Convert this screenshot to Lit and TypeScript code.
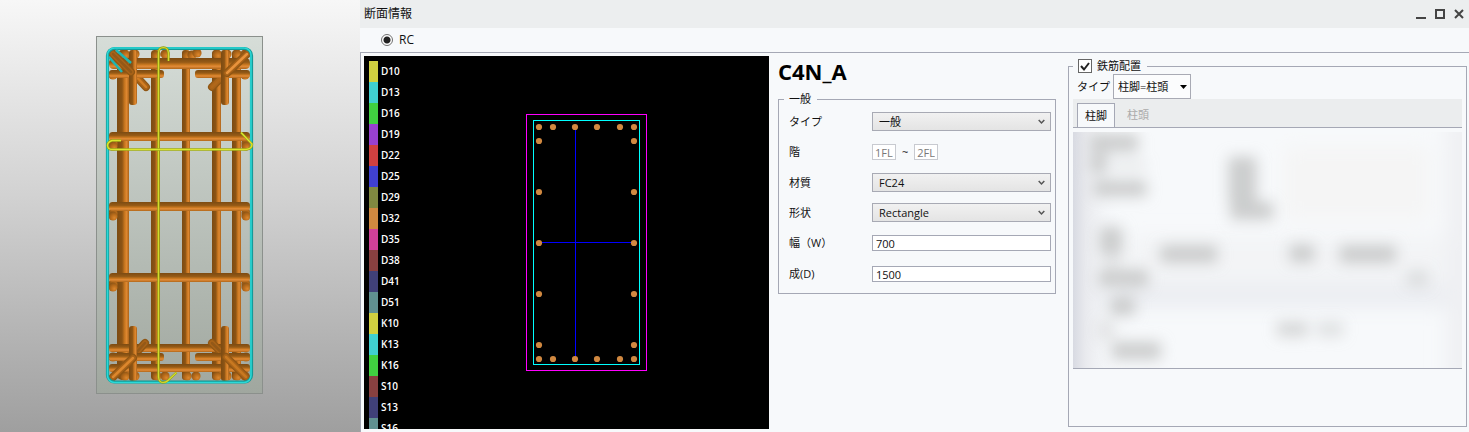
import { LitElement, html, svg, css } from "lit";
import { customElement, state } from "lit/decorators.js";

type Pt = [number, number];

/** Shaded view of the column's reinforcement cage. */
@customElement("cage-view")
class CageView extends LitElement {
  static styles = css`
    :host {
      display: block;
      min-width: 0;
      background: linear-gradient(#f7f7f7, #d2d2d2 45%, #9f9f9f);
      overflow: hidden;
    }
    .scene {
      display: block;
      width: 100%;
      height: 100%;
    }
  `;

  private vbar(x: number, w: number, y1: number, y2: number) {
    return svg`<rect x=${x} y=${y1} width=${w} height=${y2 - y1} rx=${w / 2 - 1} fill="url(#across)"/>`;
  }

  private hbar(y: number, h: number, x1: number, x2: number) {
    return svg`<rect x=${x1} y=${y} width=${x2 - x1} height=${h} rx=${h / 2 - 1} fill="url(#down)"/>`;
  }

  private slant(a: Pt, b: Pt, lit: string) {
    const d = `M${a[0]} ${a[1]}L${b[0]} ${b[1]}`;
    return svg`<g fill="none" stroke-linecap="round">
      <path d=${d} stroke="#8f5614" stroke-width="8"/>
      <path d=${d} stroke="#a96318" stroke-width="5.5"/>
      <path d=${d} stroke=${lit} stroke-width="2.5"/></g>`;
  }

  private knob(x: number, y: number) {
    return svg`<circle cx=${x} cy=${y} r="4.6" fill="url(#ball)"/>`;
  }

  render() {
    return html`<svg class="scene" viewBox="0 0 360 432" role="img" aria-label="3D">
      <defs>
        <linearGradient id="frame" x1="0" y1="0" x2="0" y2="1">
          <stop offset="0" stop-color="#d6ddd8" /><stop offset="1" stop-color="#a0a79f" />
        </linearGradient>
        <linearGradient id="across">
          <stop offset="0" stop-color="#7c4b12" /><stop offset=".42" stop-color="#8c5415" />
          <stop offset=".62" stop-color="#c4741e" /><stop offset=".8" stop-color="#df8831" />
          <stop offset="1" stop-color="#a9631a" />
        </linearGradient>
        <linearGradient id="down" x1="0" y1="0" x2="0" y2="1">
          <stop offset="0" stop-color="#7c4b12" /><stop offset=".38" stop-color="#955a16" />
          <stop offset=".62" stop-color="#cb7920" /><stop offset=".75" stop-color="#e38c38" />
          <stop offset="1" stop-color="#b0671a" />
        </linearGradient>
        <radialGradient id="ball" cx=".65" cy=".7" r=".7">
          <stop offset="0" stop-color="#dc872d" /><stop offset=".5" stop-color="#b96c1b" />
          <stop offset="1" stop-color="#8c5415" />
        </radialGradient>
      </defs>
      <rect x="96.5" y="36.5" width="166" height="357" fill="url(#frame)" stroke="#8b908c" />
      ${this.vbar(117, 12, 50, 380)} ${this.vbar(151, 9, 50, 380)}
      ${this.vbar(182, 8, 50, 380)} ${this.vbar(212, 9, 50, 380)} ${this.vbar(232, 9, 50, 380)}
      ${[
        [113, 54], [125, 54], [135, 54], [156, 55], [165, 54], [187, 55], [192, 55], [197, 53],
        [217, 54], [227, 54], [237, 54], [245, 54], [113, 75], [245, 75],
        [113, 143], [113, 146], [246, 143], [246, 146], [113, 213], [113, 216],
        [246, 213], [246, 216], [113, 284], [113, 287], [246, 284], [246, 287],
        [113, 357], [246, 357],
        [125, 376], [135, 376], [157, 376], [165, 376], [187, 376], [196, 376],
        [217, 376], [227, 376], [237, 376], [245, 376],
      ].map(([x, y]) => this.knob(x, y))}
      ${this.hbar(58, 11, 109, 250)}
      ${this.hbar(132, 9, 109, 250)} ${this.hbar(202, 9, 109, 250)} ${this.hbar(273, 9, 109, 250)}
      ${this.hbar(344, 8, 109, 250)} ${this.hbar(364, 8, 109, 250)}
      ${this.slant([132, 72], [146, 87], "#d27e24")} ${this.slant([225, 74], [212, 87], "#b0681b")}
      ${this.hbar(70, 8, 109, 164)} ${this.hbar(70, 8, 195, 250)}
      ${this.vbar(129, 8, 50, 105)} ${this.vbar(221, 8, 50, 105)}
      ${this.slant([113, 54], [131, 72], "#935918")} ${this.slant([247, 54], [227, 73], "#e8933c")}
      ${this.slant([145, 343], [136, 353], "#935918")} ${this.slant([212, 343], [222, 353], "#935918")}
      ${this.hbar(353, 8, 109, 164)} ${this.hbar(353, 8, 195, 250)}
      ${this.vbar(129, 8, 326, 381)} ${this.vbar(221, 8, 326, 381)}
      ${this.slant([133, 358], [113, 377], "#dc872d")} ${this.slant([226, 357], [246, 377], "#c87821")}
      <g fill="none">
        <rect x="107.5" y="48.5" width="144" height="333.5" rx="7" stroke="#159a98" stroke-width="3.2" />
        <rect x="107.500" y="48" width="143.500" height="334.500" rx="7" stroke="#2bd9d7" stroke-width="1.600" />
        <path d="M109 57L122 72M116 50L131 63" stroke="#1fb5b2" stroke-width="2.600" />
        <path
          d="M168.500 61V53Q168 47.500 163.500 47.500Q158.500 47.500 158.500 53V377Q159 382.500 163 382.500Q166 382.500 168 380.500L176.500 372.500"
          stroke="#8f9c16" stroke-width="2.400"
        />
        <path
          d="M168.500 61V53Q168 47.500 163.500 47.500Q158.500 47.500 158.500 53V377Q159 382.500 163 382.500Q166 382.500 168 380.500L176.500 372.500"
          stroke="#d3dc2b" stroke-width="1.200"
        />
        <path d="M121 140.500H112Q107.500 142 107.500 145.500Q108 149.500 112 149.500H246Q252 149 252 144L241 132.500" stroke="#8f9c16" stroke-width="2.400" />
        <path d="M121 140.500H112Q107.500 142 107.500 145.500Q108 149.500 112 149.500H246Q252 149 252 144L241 132.500" stroke="#dde52c" stroke-width="1.400" />
      </g>
    </svg>`;
  }
}

/** Cross-section drawing with the bar-size colour key. */
@customElement("section-canvas")
class SectionCanvas extends LitElement {
  static styles = css`
    :host {
      display: grid;
      grid-template-rows: minmax(0, 1fr);
      min-width: 0;
      min-height: 0;
      overflow: hidden;
      background: #000;
    }
    .key,
    .plan {
      grid-area: 1 / 1;
      min-height: 0;
    }
    .key {
      margin: 0;
      padding: 5px 0 0 5px;
      list-style: none;
      overflow: hidden;
      color: #fff;
      font: 600 10px/21px "Open Sans", sans-serif;
    }
    .item {
      display: flex;
      gap: 3px;
      height: 21px;
    }
    .swatch {
      width: 9px;
    }
    .plan {
      width: 100%;
      height: 100%;
    }
  `;

  private sizes: [string, string][] = [
    ["D10", "#d0d040"], ["D13", "#40d0d0"], ["D16", "#40d040"], ["D19", "#9840d0"],
    ["D22", "#d04040"], ["D25", "#4040d0"], ["D29", "#808840"], ["D32", "#d08840"],
    ["D35", "#d04098"], ["D38", "#884040"], ["D41", "#404078"], ["D51", "#609090"],
    ["K10", "#d0d040"], ["K13", "#40d0d0"], ["K16", "#40d040"], ["S10", "#884040"],
    ["S13", "#404078"], ["S16", "#609090"],
  ];

  render() {
    const bars: Pt[] = [];
    for (const y of [71, 303]) for (const x of [175, 189, 211, 233, 256, 270]) bars.push([x, y]);
    for (const y of [85, 136, 187, 238, 289]) for (const x of [175, 270]) bars.push([x, y]);
    return html`
      <svg class="plan" viewBox="0 0 405 373" role="img" aria-label="C4N_A">
        <g fill="none" shape-rendering="crispEdges">
          <rect x="162.500" y="58.500" width="120" height="256" stroke="#f0f" />
          <rect x="169.500" y="64.500" width="106" height="244" stroke="#0ff" />
          <path d="M211.500 71V303M175 186.500H270" stroke="#00f" />
        </g>
        ${bars.map(([x, y]) => svg`<circle cx=${x} cy=${y} r="3.1" fill="#d08840"/>`)}
      </svg>
      <ul class="key">
        ${this.sizes.map(
          ([name, color]) => html`<li class="item">
            <span class="swatch" style="background:${color}"></span><span>${name}</span>
          </li>`
        )}
      </ul>
    `;
  }
}

@customElement("app-root")
class AppRoot extends LitElement {
  static styles = css`
    :host {
      display: grid;
      grid-template-columns: minmax(0, 360fr) minmax(0, 1109fr);
      grid-template-rows: minmax(0, 1fr);
      height: 100vh;
      color: #111;
      font: 11px/16px "Open Sans", "Noto Sans CJK JP", sans-serif;
    }
    * {
      box-sizing: border-box;
    }
    .window {
      display: grid;
      grid-template-rows: 28px 24px minmax(0, 1fr);
      background: #f7f9fb;
    }
    .titlebar {
      display: flex;
      align-items: center;
      justify-content: space-between;
      padding: 0 4px;
      background: #eceeef;
      font-size: 12px;
    }
    .buttons {
      display: flex;
      gap: 7px;
    }
    .button {
      width: 12px;
      height: 12px;
      padding: 0;
      border: 0;
      background: none;
    }
    .button svg {
      display: block;
    }
    .kind {
      display: flex;
      align-items: center;
      gap: 6px;
      padding-left: 21px;
      font-size: 12px;
    }
    .radio {
      appearance: none;
      width: 12px;
      height: 12px;
      margin: 0;
      border: 1px solid #707070;
      border-radius: 50%;
      background: radial-gradient(circle, #222 3px, #fff 4px);
    }
    .body {
      display: grid;
      grid-template-columns: minmax(0, 405fr) minmax(0, 278fr) minmax(0, 402fr);
      grid-template-rows: minmax(0, 1fr);
      column-gap: 9px;
      padding: 3px 2px 3px 3px;
      border: solid #a5a8b5;
      border-width: 1px 0 0 1px;
    }
    .name {
      margin: 0;
      font: 700 22px/30px "Open Sans", sans-serif;
      color: #000;
    }
    .group {
      min-width: 0;
      margin: 0;
      padding: 0;
      border: 1px solid #a5a8b5;
    }
    .general {
      margin-top: 5px;
    }
    .legend {
      margin-left: 5px;
      padding: 0 6px 0 5px;
    }
    .fields {
      display: grid;
      grid-template-columns: 83px minmax(0, 1fr);
      row-gap: 11px;
      align-items: center;
      padding: 5px 4px 9px 10px;
    }
    .combo {
      display: grid;
      align-items: center;
    }
    .combo > * {
      grid-area: 1 / 1;
    }
    .select {
      appearance: none;
      width: 100%;
      height: 19px;
      padding: 0 16px 0 6px;
      border: 1px solid #a8aab4;
      border-radius: 0;
      background: linear-gradient(#f1f1f1, #e4e4e4);
      color: inherit;
      font: inherit;
      line-height: 17px;
    }
    .arrow {
      justify-self: end;
      margin-right: 6px;
      pointer-events: none;
    }
    .line {
      display: flex;
      align-items: center;
      gap: 6px;
      height: 20px;
    }
    .text {
      width: 100%;
      height: 16px;
      padding: 0 3px;
      border: 1px solid #a5a8b5;
      background: #fff;
      color: inherit;
      font: inherit;
      line-height: 14px;
    }
    .text.floor {
      width: 24px;
      padding: 0 2px;
      border-color: #c8cad0;
      color: #777;
    }
    .rebar {
      display: flex;
      flex-direction: column;
      margin-left: 3px;
      padding: 2px 0;
    }
    .rebar .group {
      flex: 1;
      padding: 0 4px;
    }
    .check-legend {
      display: flex;
      align-items: center;
      gap: 5px;
      margin-left: 0;
      height: 16px;
    }
    .check {
      appearance: none;
      width: 14px;
      height: 14px;
      margin: 0;
      border: 1px solid #666;
      background: #fff;
    }
    .box {
      display: grid;
    }
    .box > * {
      grid-area: 1 / 1;
    }
    .tick {
      pointer-events: none;
    }
    .layout {
      display: flex;
      align-items: center;
      gap: 3px;
      padding-left: 4px;
    }
    .layout .select {
      height: 25px;
      width: 78px;
      padding: 0 4px;
      background: #fbfcfd;
      line-height: 23px;
    }
    .layout .arrow {
      margin-right: 4px;
    }
    .tabs {
      display: flex;
      height: 28px;
      padding: 4px 4px 0;
      background: #ebedee;
    }
    .tab {
      width: 38px;
      padding: 0;
      border: 0;
      background: none;
      color: #aaa;
      font: inherit;
    }
    .tab.other {
      margin-left: 4px;
    }
    .tab.on {
      border: 1px solid #a5a8b5;
      border-bottom: 0;
      background: #f7f9fb;
      color: #111;
    }
    .sheet {
      height: 242px;
      padding-top: 4px;
      border: solid #a5a8b5;
      border-width: 1px 0;
    }
    .haze {
      display: block;
      width: 100%;
      height: 100%;
    }
  `;

  @state() private tab = 0;

  private chevron = html`<svg class="arrow" width="7" height="6" viewBox="0 0 7 6" aria-hidden="true">
    <path d="M.7 1L3.500 4L6.300 1" fill="none" stroke="#555" stroke-width="1.500" />
  </svg>`;

  private combo(id: string, label: string, value: string) {
    return html`<label for=${id}>${label}</label>
      <div class="combo">
        <select class="select" id=${id}><option>${value}</option></select>
        ${this.chevron}
      </div>`;
  }

  private field(id: string, label: string, value: string) {
    return html`<label for=${id}>${label}</label>
      <div class="line"><input class="text" id=${id} .value=${value} /></div>`;
  }

  private haze() {
    const spots = [
      [90, 12, 145, 54], [90, 70, 50, 60], [150, 90, 110, 30, 0.3], [100, 150, 160, 50],
      [505, 80, 85, 140], [510, 215, 130, 55], [118, 290, 70, 85], [125, 380, 65, 30, 0.4],
      [300, 345, 172, 54], [688, 343, 75, 54], [838, 345, 170, 54], [115, 418, 150, 54],
      [1040, 420, 65, 50, 0.5], [150, 500, 75, 56], [650, 575, 95, 45, 0.7],
      [770, 575, 80, 45, 0.5], [115, 570, 50, 60, 0.4], [155, 635, 148, 54],
    ];
    return html`<svg class="haze" viewBox="39 6 1167 708" preserveAspectRatio="none" aria-hidden="true">
      <defs>
        <filter id="soft" filterUnits="userSpaceOnUse" x="0" y="-60" width="1300" height="840"><feGaussianBlur stdDeviation="21" /></filter>
        <filter id="wide" filterUnits="userSpaceOnUse" x="-60" y="-100" width="1400" height="920"><feGaussianBlur stdDeviation="28" /></filter>
        <linearGradient id="edge">
          <stop offset="0" stop-color="#d8dae2" /><stop offset=".25" stop-color="#e9eaee" />
          <stop offset="1" stop-color="#f7f9fb" stop-opacity="0" />
        </linearGradient>
      </defs>
      <g filter="url(#wide)">
        <rect x="670" y="50" width="440" height="220" fill="#f5f5f5" />
        <rect x="200" y="320" width="1010" height="210" fill="#f3f4f6" />
        <rect x="60" y="470" width="1100" height="60" fill="#eaecf1" />
        <rect x="1160" y="-40" width="100" height="800" fill="#eff0f3" />
      </g>
      <rect x="39" y="6" width="150" height="708" fill="url(#edge)" />
      <g filter="url(#soft)">
        ${spots.map(
          ([x, y, w, h, o]) =>
            svg`<rect x=${x} y=${y} width=${w} height=${h} rx="12" fill="#c8c9c9" opacity=${o ?? 0.9}/>`
        )}
      </g>
    </svg>`;
  }

  render() {
    return html`
      <cage-view></cage-view>
      <main class="window">
        <header class="titlebar">
          <span>断面情報</span>
          <div class="buttons">
            <button class="button" aria-label="最小化">
              <svg width="12" height="12"><path d="M1 10H11" stroke="#444" stroke-width="2" /></svg>
            </button>
            <button class="button" aria-label="最大化">
              <svg width="12" height="12"><rect x="2" y="2" width="8" height="8" fill="none" stroke="#444" stroke-width="2" /></svg>
            </button>
            <button class="button" aria-label="閉じる">
              <svg width="12" height="12"><path d="M2 2L10 10M10 2L2 10" stroke="#444" stroke-width="2" /></svg>
            </button>
          </div>
        </header>
        <div class="kind">
          <input class="radio" type="radio" id="rc" name="kind" checked />
          <label for="rc">RC</label>
        </div>
        <div class="body">
          <section-canvas></section-canvas>
          <section>
            <h1 class="name">C4N_A</h1>
            <fieldset class="group general">
              <legend class="legend">一般</legend>
              <div class="fields">
                ${this.combo("type", "タイプ", "一般")}
                <label for="from">階</label>
                <div class="line">
                  <input class="text floor" id="from" value="1FL" disabled />
                  <span>~</span>
                  <input class="text floor" aria-label="階" value="2FL" disabled />
                </div>
                ${this.combo("material", "材質", "FC24")} ${this.combo("shape", "形状", "Rectangle")}
                ${this.field("width", "幅（W）", "700")} ${this.field("depth", "成(D)", "1500")}
              </div>
            </fieldset>
          </section>
          <section class="rebar">
            <fieldset class="group">
              <legend class="legend check-legend">
                <span class="box">
                  <input class="check" type="checkbox" id="arrange" checked />
                  <svg class="tick" width="14" height="14" aria-hidden="true">
                    <path d="M3 7L6 10.500L11 4" fill="none" stroke="#222" stroke-width="2" />
                  </svg>
                </span>
                <label for="arrange">鉄筋配置</label>
              </legend>
              <div class="layout">
                <label for="pattern">タイプ</label>
                <div class="combo">
                  <select class="select" id="pattern"><option>柱脚=柱頭</option></select>
                  <svg class="arrow" width="7" height="4" aria-hidden="true"><path d="M0 0H7L3.500 4Z" fill="#000" /></svg>
                </div>
              </div>
              <div class="tabs" role="tablist">
                ${["柱脚", "柱頭"].map(
                  (name, i) => html`<button
                    class="tab ${this.tab === i ? "on" : "other"}"
                    role="tab"
                    aria-selected=${this.tab === i}
                    @click=${() => (this.tab = i)}
                  >${name}</button>`
                )}
              </div>
              <div class="sheet">${this.haze()}</div>
            </fieldset>
          </section>
        </div>
      </main>
    `;
  }
}
